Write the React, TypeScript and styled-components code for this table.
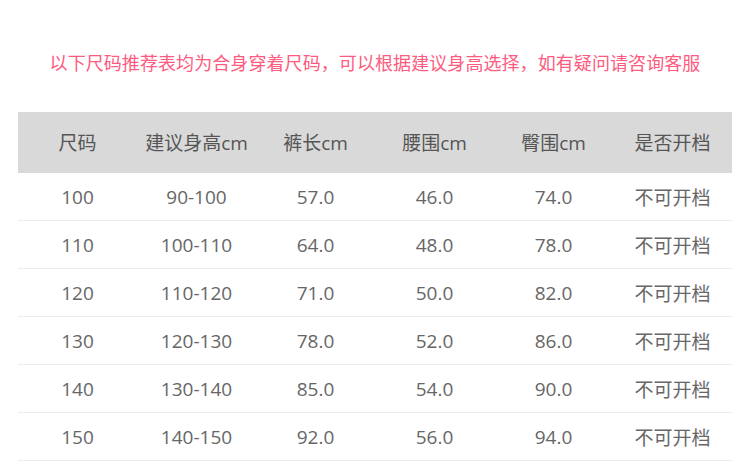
import styled, { createGlobalStyle } from 'styled-components'

const GlobalStyle = createGlobalStyle`
  html, body {
    margin: 0;
    padding: 0;
    background: #fff;
  }
  body {
    font-family: "Open Sans", "Noto Sans CJK SC", sans-serif;
  }
`

const headers = ['尺码', '建议身高cm', '裤长cm', '腰围cm', '臀围cm', '是否开档']

const rows = [
  ['100', '90-100', '57.0', '46.0', '74.0', '不可开档'],
  ['110', '100-110', '64.0', '48.0', '78.0', '不可开档'],
  ['120', '110-120', '71.0', '50.0', '82.0', '不可开档'],
  ['130', '120-130', '78.0', '52.0', '86.0', '不可开档'],
  ['140', '130-140', '85.0', '54.0', '90.0', '不可开档'],
  ['150', '140-150', '92.0', '56.0', '94.0', '不可开档']
]

const App = (): JSX.Element => {
  return (
    <Page>
      <GlobalStyle />
      <Notice>
        以下尺码推荐表均为合身穿着尺码，可以根据建议身高选择，如有疑问请咨询客服
      </Notice>
      <SizeTable>
        <HeaderRow>
          {headers.map(h => (
            <HeadCell key={h}>{h}</HeadCell>
          ))}
        </HeaderRow>
        {rows.map(r => (
          <Row key={r[0]}>
            {r.map((c, i) => (
              <Cell key={i}>{c}</Cell>
            ))}
          </Row>
        ))}
      </SizeTable>
    </Page>
  )
}

const Page = styled.div`
  width: 750px;
  height: 462px;
  overflow: hidden;
  padding-top: 50px;
  box-sizing: border-box;
`
const Notice = styled.p`
  margin: 0;
  text-align: center;
  color: #fd5b80;
  font-size: 18px;
  line-height: 26px;
  letter-spacing: 0.08px;
`
const SizeTable = styled.div`
  margin: 36px 18px 0 18px;
  width: 714px;
`
const HeaderRow = styled.div`
  display: grid;
  grid-template-columns: repeat(6, 1fr);
  height: 61px;
  align-items: center;
  background: #d9d9d9;
`
const HeadCell = styled.div`
  text-align: center;
  color: #555;
  font-size: 19px;
  padding-bottom: 2px;
`
const Row = styled.div`
  display: grid;
  grid-template-columns: repeat(6, 1fr);
  height: 48px;
  align-items: center;
  border-bottom: 1px solid #ececec;
  box-sizing: border-box;
`
const Cell = styled.div`
  text-align: center;
  color: #666;
  font-size: 19px;
`

export default App
